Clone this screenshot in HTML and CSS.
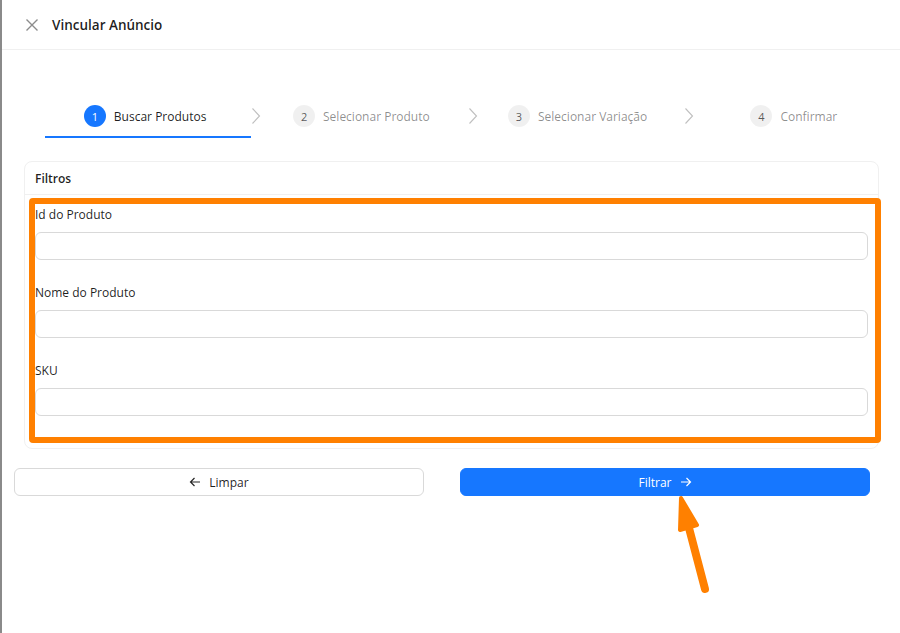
FILE: index.html
```html
<!DOCTYPE html>
<html lang="pt-BR">
<head>
  <meta charset="UTF-8" />
  <meta name="viewport" content="width=device-width, initial-scale=1.0"/>
  <title>Vincular Anúncio</title>
  <link rel="stylesheet" href="styles.css">
</head>
<body>
  <div class="drawer">
    <div class="drawer-header">
      <button class="close" title="Fechar">
        <svg width="14" height="14" viewBox="0 0 14 14"><path d="M1.5 1.5 L12.5 12.5 M12.5 1.5 L1.5 12.5" stroke="#8c8c8c" stroke-width="1.4" fill="none"/></svg>
      </button>
      <span class="drawer-title">Vincular Anúncio</span>
    </div>

    <div class="steps">
      <div class="step active"><span class="step-num">1</span><span class="step-label">Buscar Produtos</span></div>
      <span class="step-sep"><svg width="10" height="18" viewBox="0 0 10 18"><path d="M1.5 1.5 L8.5 9 L1.5 16.5" stroke="#bfbfbf" stroke-width="1.1" fill="none"/></svg></span>
      <div class="step"><span class="step-num">2</span><span class="step-label">Selecionar Produto</span></div>
      <span class="step-sep"><svg width="10" height="18" viewBox="0 0 10 18"><path d="M1.5 1.5 L8.5 9 L1.5 16.5" stroke="#bfbfbf" stroke-width="1.1" fill="none"/></svg></span>
      <div class="step"><span class="step-num">3</span><span class="step-label">Selecionar Variação</span></div>
      <span class="step-sep"><svg width="10" height="18" viewBox="0 0 10 18"><path d="M1.5 1.5 L8.5 9 L1.5 16.5" stroke="#bfbfbf" stroke-width="1.1" fill="none"/></svg></span>
      <div class="step"><span class="step-num">4</span><span class="step-label">Confirmar</span></div>
    </div>

    <div class="card">
      <div class="card-head">Filtros</div>
      <div class="card-body">
        <div class="field">
          <label for="f-id">Id do Produto</label>
          <input id="f-id" type="text">
        </div>
        <div class="field">
          <label for="f-nome">Nome do Produto</label>
          <input id="f-nome" type="text">
        </div>
        <div class="field">
          <label for="f-sku">SKU</label>
          <input id="f-sku" type="text">
        </div>
      </div>
    </div>

    <div class="actions">
      <button class="btn">
        <svg width="12" height="12" viewBox="0 0 12 12"><path d="M11 6 H1.5 M5.5 2 L1.5 6 L5.5 10" stroke="#262626" stroke-width="1.2" fill="none"/></svg>
        Limpar
      </button>
      <button class="btn btn-primary">
        Filtrar
        <svg width="12" height="12" viewBox="0 0 12 12"><path d="M1 6 H10.5 M6.5 2 L10.5 6 L6.5 10" stroke="#fff" stroke-width="1.2" fill="none"/></svg>
      </button>
    </div>

    <!-- destaque laranja -->
    <div class="mark-box"></div>
    <svg class="mark-arrow" width="60" height="110" viewBox="0 0 60 110">
      <path d="M45 97 L29 36" stroke="#ff8000" stroke-width="8" stroke-linecap="round" fill="none"/>
      <path d="M21 6 L37 33 L20 38 Z" fill="#ff8000" stroke="#ff8000" stroke-width="4" stroke-linejoin="round"/>
    </svg>
  </div>
</body>
</html>
```

FILE: styles.css
```css
* {
  box-sizing: border-box;
}

body {
  margin: 0;
  font-family: "Open Sans", "Noto Sans", sans-serif;
  font-size: 12px;
  color: rgba(0,0,0,0.88);
  background: #fff;
}

.drawer {
  position: relative;
  height: 100vh;
  border-left: 2px solid #8a8a8a;
}

.drawer-header {
  height: 50px;
  display: flex;
  align-items: center;
  gap: 12px;
  padding: 0 22px 0 22px;
  border-bottom: 1px solid #f0f0f0;
}

.close {
  border: 0;
  background: none;
  padding: 0;
  width: 16px;
  height: 16px;
  display: flex;
  align-items: center;
  justify-content: center;
}

.drawer-title {
  font-size: 13.5px;
  font-weight: 600;
}

.steps {
  display: flex;
  align-items: center;
  margin: 46px 0 0 43px;
}

.step {
  flex: 1;
  height: 42px;
  display: flex;
  align-items: center;
  justify-content: center;
  gap: 8px;
  border-bottom: 2px solid transparent;
  color: rgba(0,0,0,0.45);
  padding-right: 6px;
}

.step.active {
  border-bottom-color: #1677ff;
  color: rgba(0,0,0,0.88);
}

.step-num {
  width: 22px;
  height: 22px;
  border-radius: 50%;
  background: rgba(0,0,0,0.06);
  color: rgba(0,0,0,0.65);
  font-size: 11px;
  display: flex;
  align-items: center;
  justify-content: center;
}

.step.active .step-num {
  background: #1677ff;
  color: #fff;
}

.step-sep {
  width: 10px;
  display: flex;
  margin-bottom: 2px;
}

.card {
  margin: 23px 21px 0 22px;
  border: 1px solid #f0f0f0;
  border-radius: 8px;
}

.card-head {
  height: 33px;
  padding: 0 10px;
  display: flex;
  align-items: center;
  font-weight: 600;
  border-bottom: 1px solid #f0f0f0;
}

.card-body {
  padding: 9px 10px 10px;
}

.field {
  margin-bottom: 22px;
}

.field label {
  display: block;
  line-height: 22px;
  margin-bottom: 6px;
}

.field input {
  display: block;
  width: 100%;
  height: 28px;
  border: 1px solid #d9d9d9;
  border-radius: 6px;
  padding: 0 10px;
  font: inherit;
}

.actions {
  display: flex;
  gap: 36px;
  margin: 19px 30px 0 12px;
}

.btn {
  flex: 1;
  height: 28px;
  display: flex;
  align-items: center;
  justify-content: center;
  gap: 8px;
  font: inherit;
  background: #fff;
  color: rgba(0,0,0,0.88);
  border: 1px solid #d9d9d9;
  border-radius: 6px;
}

.btn-primary {
  background: #1677ff;
  border-color: #1677ff;
  color: #fff;
}

.mark-box {
  position: absolute;
  left: 27px;
  top: 198px;
  width: 852px;
  height: 245px;
  border: 6px solid #ff8000;
  border-radius: 4px;
}

.mark-arrow {
  position: absolute;
  left: 658px;
  top: 492px;
}
```
